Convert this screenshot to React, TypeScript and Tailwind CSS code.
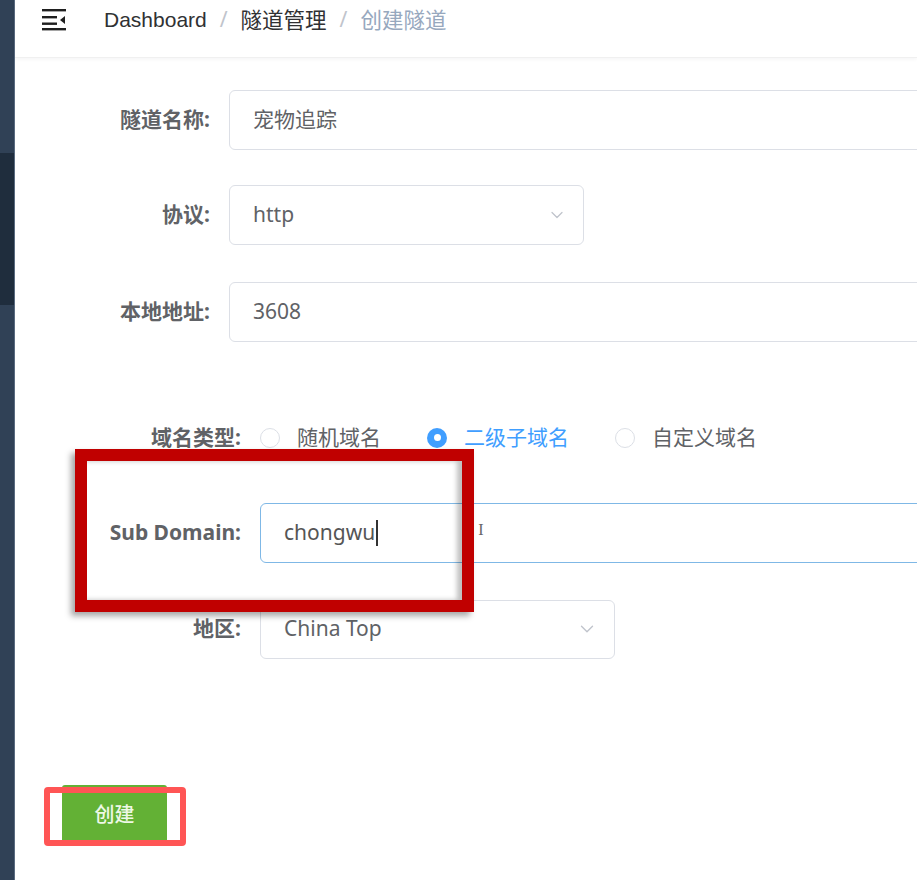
import { ChevronDown } from 'lucide-react';

const cjk = "font-['Noto_Sans','Noto_Sans_CJK_SC',sans-serif]";

function Hamburger() {
  return (
    <svg width="26" height="24" viewBox="0 0 26 24" className="block">
      <rect x="0" y="0" width="24" height="2.4" fill="#1f1f1f" />
      <rect x="0" y="7" width="15" height="2.4" fill="#1f1f1f" />
      <rect x="0" y="13.5" width="15" height="2.4" fill="#1f1f1f" />
      <rect x="0" y="19" width="24" height="2.4" fill="#1f1f1f" />
      <path d="M18 11 L23 7 L23 15 Z" fill="#1f1f1f" />
    </svg>
  );
}

function Radio({ label, checked }: { label: string; checked?: boolean }) {
  return (
    <label className="flex items-center gap-[17px]">
      {checked ? (
        <span className="flex h-[20px] w-[20px] items-center justify-center rounded-full bg-[#409eff]">
          <span className="h-[7px] w-[7px] rounded-full bg-white" />
        </span>
      ) : (
        <span className="h-[20px] w-[20px] rounded-full border border-[#dcdfe6] bg-white" />
      )}
      <span className={`text-[21px] ${checked ? 'text-[#409eff]' : 'text-[#606266]'}`}>
        {label}
      </span>
    </label>
  );
}

export default function App() {
  return (
    <div className={`flex h-[880px] w-[917px] overflow-hidden bg-white ${cjk}`}>
      <aside className="flex w-[15px] shrink-0 flex-col border-r border-[#5a6b80] bg-[#304156]">
        <div className="h-[153px]" />
        <div className="h-[152px] bg-[#1f2d3d]" />
      </aside>

      <main className="relative min-w-0 flex-1">
        <header className="flex h-[58px] items-start border-b border-[#f0f0f0] pl-[27px] pt-[9px] shadow-[0_1px_4px_rgba(0,21,41,0.05)]">
          <Hamburger />
          <nav className="ml-[36px] -mt-[5px] flex items-center text-[21px]">
            <span className="font-['Liberation_Sans','Noto_Sans_CJK_SC',sans-serif] text-[#303133]">
              Dashboard
            </span>
            <span className="mx-[13px] text-[#c0c4cc]">/</span>
            <span className="text-[21.5px] text-[#303133]">隧道管理</span>
            <span className="mx-[13px] text-[#c0c4cc]">/</span>
            <span className="text-[21.5px] text-[#97a8be]">创建隧道</span>
          </nav>
        </header>

        <form className="flex flex-col pt-[32px]">
          {/* first group */}
          <div className="flex items-center">
            <label className="w-[214px] shrink-0 pr-[19px] text-right text-[21px] font-bold text-[#606266]">
              隧道名称:
            </label>
            <div className="flex h-[60px] w-[720px] shrink-0 items-center rounded-[6px] border border-[#dcdfe6] px-[23px] text-[21px] text-[#606266]">
              宠物追踪
            </div>
          </div>

          <div className="mt-[35px] flex items-center">
            <label className="w-[214px] shrink-0 pr-[19px] text-right text-[21px] font-bold text-[#606266]">
              协议:
            </label>
            <div className="flex h-[60px] w-[355px] shrink-0 items-center justify-between rounded-[6px] border border-[#dcdfe6] pl-[23px] pr-[16px] text-[21px] text-[#606266]">
              http
              <ChevronDown size={20} strokeWidth={1.5} color="#c0c4cc" />
            </div>
          </div>

          <div className="mt-[37px] flex items-center">
            <label className="w-[214px] shrink-0 pr-[19px] text-right text-[21px] font-bold text-[#606266]">
              本地地址:
            </label>
            <div className="flex h-[60px] w-[720px] shrink-0 items-center rounded-[6px] border border-[#dcdfe6] px-[23px] text-[21px] text-[#606266]">
              3608
            </div>
          </div>

          {/* second group */}
          <div className="mt-[80px] flex items-center">
            <label className="w-[245px] shrink-0 pr-[19px] text-right text-[21px] font-bold text-[#606266]">
              域名类型:
            </label>
            <div className="flex items-center gap-[46px]">
              <Radio label="随机域名" />
              <Radio label="二级子域名" checked />
              <Radio label="自定义域名" />
            </div>
          </div>

          <div className="mt-[49px] flex items-center">
            <label className="w-[245px] shrink-0 pr-[19px] text-right text-[21px] font-bold text-[#606266]">
              Sub Domain:
            </label>
            <div className="flex h-[60px] w-[700px] shrink-0 items-center rounded-[6px] border border-[#7fb8e6] px-[23px] text-[21px] text-[#555]">
              chongwu
              <span className="ml-[1px] h-[26px] w-[2px] bg-[#333]" />
              <span className="ml-[100px] -mt-[6px] font-['Liberation_Serif',serif] text-[16px] text-[#666]">I</span>
            </div>
          </div>

          <div className="mt-[37px] flex items-center">
            <label className="w-[245px] shrink-0 pr-[19px] text-right text-[21px] font-bold text-[#606266]">
              地区:
            </label>
            <div className="flex h-[59px] w-[355px] shrink-0 items-center justify-between rounded-[6px] border border-[#dcdfe6] pl-[23px] pr-[16px] text-[21px] text-[#606266]">
              China Top
              <ChevronDown size={22} strokeWidth={1.5} color="#c0c4cc" />
            </div>
          </div>

          <div className="ml-[47px] mt-[126px]">
            <button
              type="button"
              className="flex h-[61px] w-[105px] items-center justify-center rounded-[3px] bg-[#63b135] text-[20px] font-medium text-[#eef8e6]"
            >
              创建
            </button>
          </div>
        </form>

        {/* annotation boxes */}
        <div className="absolute left-[60px] top-[449px] h-[163px] w-[399px] border-[12px] border-[#c00000] shadow-[-4px_4px_6px_rgba(0,0,0,0.35),inset_-5px_0_5px_rgba(0,0,0,0.25)]" />
        <div className="absolute left-[29px] top-[787px] h-[59px] w-[142px] rounded-[4px] border-[6px] border-[#ff5555]" />
      </main>
    </div>
  );
}
